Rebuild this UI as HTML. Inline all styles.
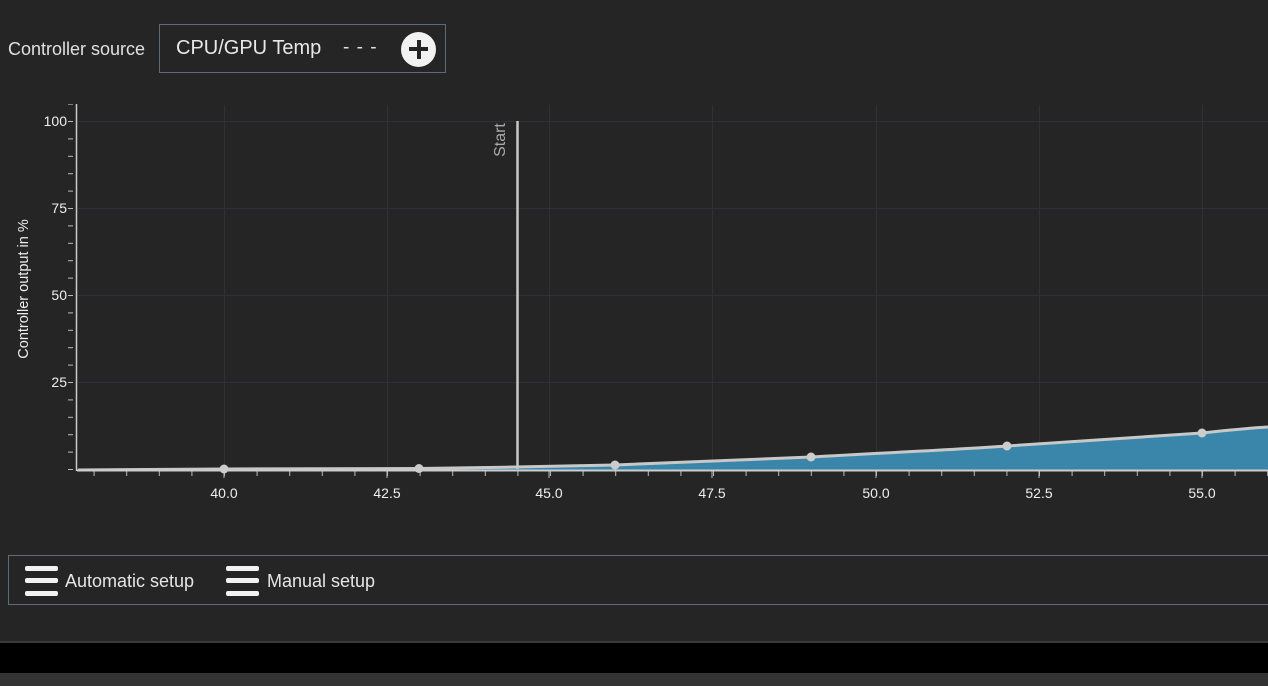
<!DOCTYPE html>
<html><head><meta charset="utf-8"><style>
html,body{margin:0;padding:0;background:#252525;width:1268px;height:686px;overflow:hidden;font-family:"Liberation Sans",sans-serif;color:#e6e6e6}
.lbl{position:absolute;left:8px;top:39px;font-size:18px;color:#e0e0e0}
.src{position:absolute;left:159px;top:24px;width:287px;height:49px;border:1px solid #5d6a78;box-sizing:border-box}
.src .t{position:absolute;left:16px;top:12px;font-size:20px;color:#e8e8e8}
.src .d{position:absolute;left:183px;top:12px;font-size:19px;color:#e0e0e0;letter-spacing:1px}
.src .p{position:absolute;left:241px;top:7px;width:35px;height:35px;border-radius:50%;background:#f2f2f2}
.src .p:before{content:"";position:absolute;left:8px;top:15px;width:19px;height:4px;background:#252525}
.src .p:after{content:"";position:absolute;left:15.5px;top:8px;width:4px;height:19px;background:#252525}
.panel{position:absolute;left:8px;top:555px;width:1270px;height:50px;border:1px solid #5d6a78;box-sizing:border-box}
.btn{position:absolute;top:15px;font-size:18px;color:#e6e6e6}
.ham{position:absolute;top:10px;width:33px;height:30px}
.ham i{position:absolute;left:0;width:33px;height:5px;border-radius:2px;background:#f2f2f2}
</style></head><body>
<div class="lbl">Controller source</div>
<div class="src"><span class="t">CPU/GPU Temp</span><span class="d">- - -</span><div class="p"></div></div>
<svg width="1268" height="540" style="position:absolute;left:0;top:0" font-family="Liberation Sans, sans-serif">
<defs>
<pattern id="xt" x="93.6" y="0" width="32.6" height="10" patternUnits="userSpaceOnUse"><rect x="0" y="0" width="1" height="10" fill="#bbb"/></pattern>
<pattern id="yt" x="0" y="121" width="10" height="17.4" patternUnits="userSpaceOnUse"><rect x="0" y="0" width="10" height="1" fill="#bbb"/></pattern>
</defs>
<g stroke="#303036" stroke-width="1">
<line x1="224.5" y1="105" x2="224.5" y2="469"/><line x1="387.5" y1="105" x2="387.5" y2="469"/><line x1="549.5" y1="105" x2="549.5" y2="469"/><line x1="712.5" y1="105" x2="712.5" y2="469"/><line x1="876.5" y1="105" x2="876.5" y2="469"/><line x1="1039.5" y1="105" x2="1039.5" y2="469"/><line x1="1202.5" y1="105" x2="1202.5" y2="469"/>
<line x1="78" y1="121.5" x2="1268" y2="121.5"/><line x1="78" y1="208.5" x2="1268" y2="208.5"/><line x1="78" y1="295.5" x2="1268" y2="295.5"/><line x1="78" y1="382.5" x2="1268" y2="382.5"/>
</g>
<rect x="93" y="471" width="1175" height="5" fill="url(#xt)"/>
<rect x="68" y="104" width="5" height="366" fill="url(#yt)"/>
<g fill="#bbb"><rect x="223.5" y="471" width="1" height="7"/><rect x="386.5" y="471" width="1" height="7"/><rect x="548.5" y="471" width="1" height="7"/><rect x="711.5" y="471" width="1" height="7"/><rect x="875.5" y="471" width="1" height="7"/><rect x="1038.5" y="471" width="1" height="7"/><rect x="1201.5" y="471" width="1" height="7"/></g>
<path d="M78,470 L224,469 C320,469 380,469 419,468.5 C480,468 560,466 615,465 C700,462 760,459 811,457 C880,453 950,450 1007,446 C1080,441 1150,437 1202,433 C1230,430 1250,428 1268,427 L1268,470 Z" fill="#3a86ab"/>
<path d="M78,470 L224,469 C320,469 380,469 419,468.5 C480,468 560,466 615,465 C700,462 760,459 811,457 C880,453 950,450 1007,446 C1080,441 1150,437 1202,433 C1230,430 1250,428 1268,427" fill="none" stroke="#c8c8c8" stroke-width="3"/>
<line x1="76.5" y1="104" x2="76.5" y2="471" stroke="#ccc" stroke-width="1.5"/>
<line x1="77" y1="470.5" x2="1268" y2="470.5" stroke="#ccc" stroke-width="2"/>
<line x1="517.5" y1="121" x2="517.5" y2="469" stroke="#c8c8c8" stroke-width="2.5"/>
<g fill="#ccc"><circle cx="224" cy="469" r="4.5"/><circle cx="419" cy="468.5" r="4.5"/><circle cx="615" cy="465" r="4.5"/><circle cx="811" cy="457" r="4.5"/><circle cx="1007" cy="446" r="4.5"/><circle cx="1202" cy="433" r="4.5"/></g>
<text x="505" y="140" transform="rotate(-90 505 140)" text-anchor="middle" font-size="16" fill="#aaa">Start</text>
<g font-size="14" fill="#eee" text-anchor="end"><text x="67" y="126">100</text><text x="67" y="213">75</text><text x="67" y="300">50</text><text x="67" y="387">25</text></g>
<g font-size="14" fill="#eee" text-anchor="middle"><text x="224" y="498">40.0</text><text x="387" y="498">42.5</text><text x="549" y="498">45.0</text><text x="712" y="498">47.5</text><text x="876" y="498">50.0</text><text x="1039" y="498">52.5</text><text x="1202" y="498">55.0</text></g>
<text x="28" y="289" transform="rotate(-90 28 289)" text-anchor="middle" font-size="14.5" fill="#eee">Controller output in %</text>
</svg>
<div class="panel">
<div class="ham" style="left:16px"><i style="top:0"></i><i style="top:12px"></i><i style="top:25px"></i></div>
<span class="btn" style="left:56px">Automatic setup</span>
<div class="ham" style="left:217px"><i style="top:0"></i><i style="top:12px"></i><i style="top:25px"></i></div>
<span class="btn" style="left:258px">Manual setup</span>
</div>
<div style="position:absolute;left:0;top:641px;width:1268px;height:2px;background:#3a3a3a"></div>
<div style="position:absolute;left:0;top:643px;width:1268px;height:30px;background:#000"></div>
<div style="position:absolute;left:0;top:673px;width:1268px;height:13px;background:#333"></div>
</body></html>
